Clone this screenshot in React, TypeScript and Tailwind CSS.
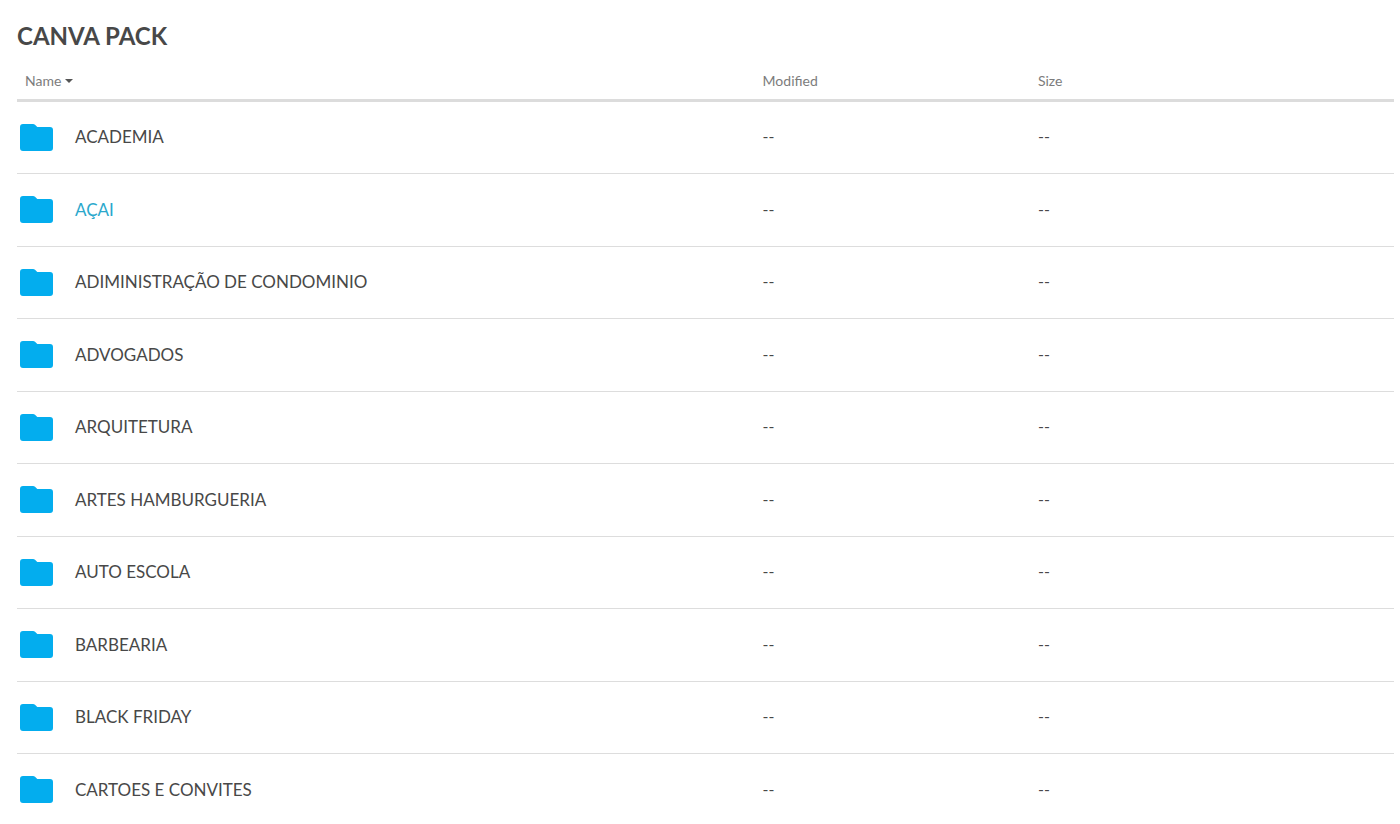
const folders = [
  'ACADEMIA',
  'AÇAI',
  'ADIMINISTRAÇÃO DE CONDOMINIO',
  'ADVOGADOS',
  'ARQUITETURA',
  'ARTES HAMBURGUERIA',
  'AUTO ESCOLA',
  'BARBEARIA',
  'BLACK FRIDAY',
  'CARTOES E CONVITES',
];

function FolderIcon() {
  return (
    <svg viewBox="0 0 33 27" className="h-[27px] w-[33px] shrink-0" aria-hidden="true">
      <path
        fill="#03adee"
        d="M3 0H13a3 3 0 0 1 2 .8L17.300 3H30a3 3 0 0 1 3 3V24a3 3 0 0 1-3 3H3A3 3 0 0 1 0 24V3A3 3 0 0 1 3 0Z"
      />
    </svg>
  );
}

export default function App() {
  return (
    <main className="min-h-screen bg-white pt-5 pr-1.5 pl-[17px] font-['Lato',sans-serif] text-[#484848]">
      <h1 className="text-2xl leading-8 font-bold">CANVA PACK</h1>
      <table className="mt-3 w-full table-fixed border-collapse text-left">
        <colgroup>
          <col className="w-[54%]" />
          <col className="w-[20%]" />
          <col className="w-[26%]" />
        </colgroup>
        <thead>
          <tr className="h-9 border-b-[3px] border-[#dcdcdc] text-sm text-[#7c7c7c]">
            <th className="pl-2 font-normal">
              <button type="button" className="flex items-center gap-1">
                Name
                <svg viewBox="0 0 8 4" className="h-1 w-2" aria-hidden="true">
                  <path d="M0 0h8L4 4Z" fill="#555" />
                </svg>
              </button>
            </th>
            <th className="pl-0.5 font-normal">Modified</th>
            <th className="pl-0.5 font-normal">Size</th>
          </tr>
        </thead>
        <tbody>
          {folders.map((name) => (
            <tr key={name} className="h-[72px] border-b border-[#ddd] first:h-[73px] last:border-b-0 even:h-[73px]">
              <td className="pl-[3px]">
                <a href="#" className="flex items-center gap-[22px] text-[17px] leading-6">
                  <FolderIcon />
                  <span className={name === 'AÇAI' ? 'text-[#2ba8cc]' : ''}>{name}</span>
                </a>
              </td>
              <td className="pb-0.5 pl-0.5 text-base">--</td>
              <td className="pb-0.5 pl-0.5 text-base">--</td>
            </tr>
          ))}
        </tbody>
      </table>
    </main>
  );
}
